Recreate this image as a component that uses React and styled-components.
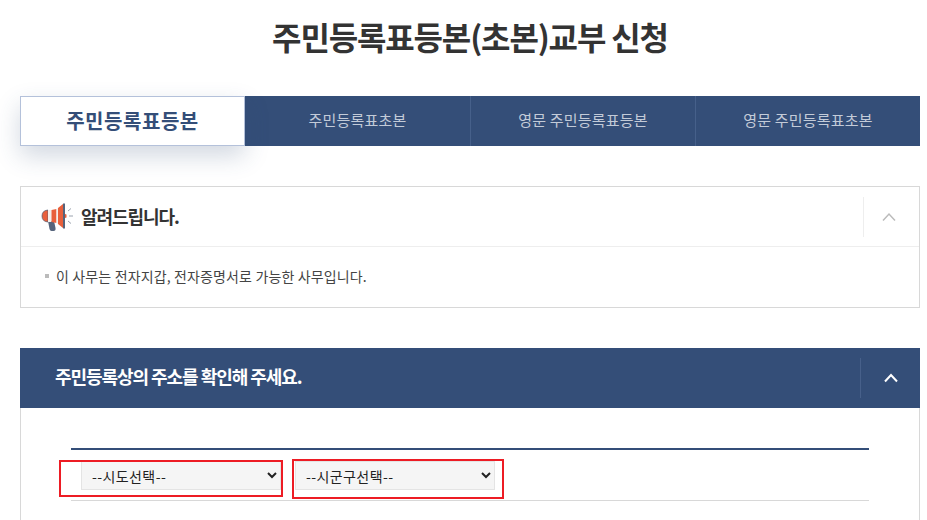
import React from 'react'
import styled, { createGlobalStyle } from 'styled-components'

const GlobalStyle = createGlobalStyle`
  html, body {
    margin: 0;
    padding: 0;
    height: 520px;
    overflow: hidden;
    background: #fff;
    font-family: "Noto Sans CJK KR", "Noto Sans", sans-serif;
    color: #333;
  }
`

const Page = styled.main`
  width: 900px;
  margin-left: 20px;
`

const Title = styled.h1`
  margin: 0;
  height: 96px;
  padding-top: 12px;
  box-sizing: border-box;
  font-size: 32px;
  line-height: 48px;
  font-weight: 700;
  letter-spacing: -1.15px;
  text-align: center;
  color: #333;
`

const TabList = styled.ul`
  display: grid;
  grid-template-columns: repeat(4, 225px);
  height: 50px;
  margin: 0 0 40px;
  padding: 0;
  list-style: none;
  background: #344e78;
`

const Tab = styled.li`
  display: flex;
  align-items: center;
  justify-content: center;
  box-sizing: border-box;
  padding-bottom: ${p => (p.$active ? '1px' : '3px')};
  font-size: ${p => (p.$active ? '20px' : '15px')};
  font-weight: ${p => (p.$active ? 700 : 400)};
  letter-spacing: ${p => (p.$active ? '0.55px' : '0.2px')};
  color: ${p => (p.$active ? '#344e78' : '#c3cbd8')};
  background: ${p => (p.$active ? '#fff' : 'transparent')};
  border: ${p => (p.$active ? '1px solid #b4c1da' : 'none')};
  border-left: ${p => (p.$divider ? '1px solid #46608a' : '')};
  box-shadow: ${p => (p.$active ? '0 10px 24px rgba(52, 78, 120, 0.22)' : 'none')};
`

const Notice = styled.section`
  border: 1px solid #d8d8d8;
  margin-bottom: 40px;
`

const NoticeHead = styled.div`
  display: flex;
  align-items: center;
  height: 59px;
  padding-left: 19px;
  border-bottom: 1px solid #eee;
`

const NoticeTitle = styled.h2`
  flex: 1;
  margin: 0 0 2px 7px;
  font-size: 18px;
  font-weight: 700;
  letter-spacing: -1.07px;
  color: #333;
`

const Toggle = styled.div`
  display: flex;
  align-items: center;
  justify-content: center;
  width: ${p => (p.$dark ? '59px' : '50px')};
  height: 40px;
  border-left: 1px solid ${p => (p.$dark ? '#47608a' : '#eee')};
  margin-right: ${p => (p.$dark ? '0' : '5px')};
`

const NoticeBody = styled.div`
  display: flex;
  align-items: center;
  height: 60px;
  padding: 0 0 3px 24px;
  box-sizing: border-box;
  font-size: 14px;
  letter-spacing: 0.14px;
  color: #444;
`

const Bullet = styled.span`
  width: 4px;
  height: 4px;
  margin-right: 7px;
  background: #bbb;
`

const SectionHead = styled.div`
  display: flex;
  align-items: center;
  height: 60px;
  padding-left: 35px;
  background: #344e78;
`

const SectionTitle = styled.h2`
  flex: 1;
  margin: 0 0 4px;
  font-size: 18px;
  font-weight: 700;
  letter-spacing: -1.05px;
  color: #fff;
`

const SectionBody = styled.div`
  height: 112px;
  padding: 40px 50px 0;
  box-sizing: border-box;
  border-left: 1px solid #d8d8d8;
  border-right: 1px solid #d8d8d8;
`

const AddressRow = styled.div`
  display: flex;
  gap: 14px;
  height: 53px;
  padding: 11px 0 0 10px;
  box-sizing: border-box;
  border-top: 2px solid #344e78;
  border-bottom: 1px solid #d8d8d8;
`

const SelectWrap = styled.div`
  position: relative;
  height: 29px;
`

const Select = styled.select`
  display: block;
  width: 200px;
  height: 29px;
  padding: 0 6px;
  box-sizing: border-box;
  border: 1px solid #e4e4e4;
  border-radius: 0;
  background: #f5f5f5;
  font-family: "Noto Sans CJK KR", sans-serif;
  font-size: 14px;
  letter-spacing: 0.4px;
  color: #222;
`

const RedMark = styled.span`
  position: absolute;
  box-sizing: border-box;
  top: ${p => p.$top}px;
  left: ${p => p.$left}px;
  width: ${p => p.$width}px;
  height: ${p => p.$height}px;
  border: 2px solid #ed1c24;
  pointer-events: none;
`

const Chevron = ({ color, width = 2 }) => (
  <svg width="16" height="10" viewBox="0 0 16 10" fill="none" aria-hidden="true">
    <path d="M2 8.5 L8 2 L14 8.5" stroke={color} strokeWidth={width} />
  </svg>
)

const Megaphone = () => (
  <svg width="34" height="30" viewBox="0 0 34 30" aria-hidden="true">
    <path d="M8 19 L14 19 L15.5 26 Q16 29 13.5 29 L11.5 29 Q10 29 9.5 27 Z" fill="#56647c" />
    <path d="M8 8 L8 20 Q2 19.5 2 14 Q2 8.5 8 8 Z" fill="#e8603c" stroke="#4d5a70" strokeWidth="0.7" />
    <rect x="8" y="8" width="3.5" height="12" fill="#f4f0ec" />
    <path d="M11.5 8 L16.5 7 L16.5 21 L11.5 20 Z" fill="#e8603c" />
    <path d="M16.5 7 L18 6 L18 22 L16.5 21 Z" fill="#f4f0ec" />
    <path d="M18 6 L23 2 L23 26 L18 22 Z" fill="#e8603c" />
    <rect x="23" y="1.5" width="2" height="25" fill="#56647c" />
    <path d="M25 12 L26.5 12.5 L26.5 15.5 L25 16 Z" fill="#e8603c" />
    <path d="M28 9 L31 6.5 M29 14 L33 14 M28 19 L31 21.5" stroke="#9aa2ae" strokeWidth="1" />
  </svg>
)

const tabs = ['주민등록표등본', '주민등록표초본', '영문 주민등록표등본', '영문 주민등록표초본']

export default function App() {
  return (
    <Page>
      <GlobalStyle />
      <Title>주민등록표등본(초본)교부 신청</Title>
      <TabList>
        {tabs.map((t, i) => (
          <Tab key={t} $active={i === 0} $divider={i > 1}>{t}</Tab>
        ))}
      </TabList>
      <Notice>
        <NoticeHead>
          <Megaphone />
          <NoticeTitle>알려드립니다.</NoticeTitle>
          <Toggle><Chevron color="#bbb" width={1.5} /></Toggle>
        </NoticeHead>
        <NoticeBody>
          <Bullet />
          이 사무는 전자지갑, 전자증명서로 가능한 사무입니다.
        </NoticeBody>
      </Notice>
      <SectionHead>
        <SectionTitle>주민등록상의 주소를 확인해 주세요.</SectionTitle>
        <Toggle $dark><Chevron color="#fff" /></Toggle>
      </SectionHead>
      <SectionBody>
        <AddressRow>
          <SelectWrap>
            <Select defaultValue="">
              <option value="">--시도선택--</option>
            </Select>
            <RedMark $top={-1} $left={-22} $width={224} $height={37} />
          </SelectWrap>
          <SelectWrap>
            <Select defaultValue="">
              <option value="">--시군구선택--</option>
            </Select>
            <RedMark $top={-2} $left={-3} $width={212} $height={40} />
          </SelectWrap>
        </AddressRow>
      </SectionBody>
    </Page>
  )
}
